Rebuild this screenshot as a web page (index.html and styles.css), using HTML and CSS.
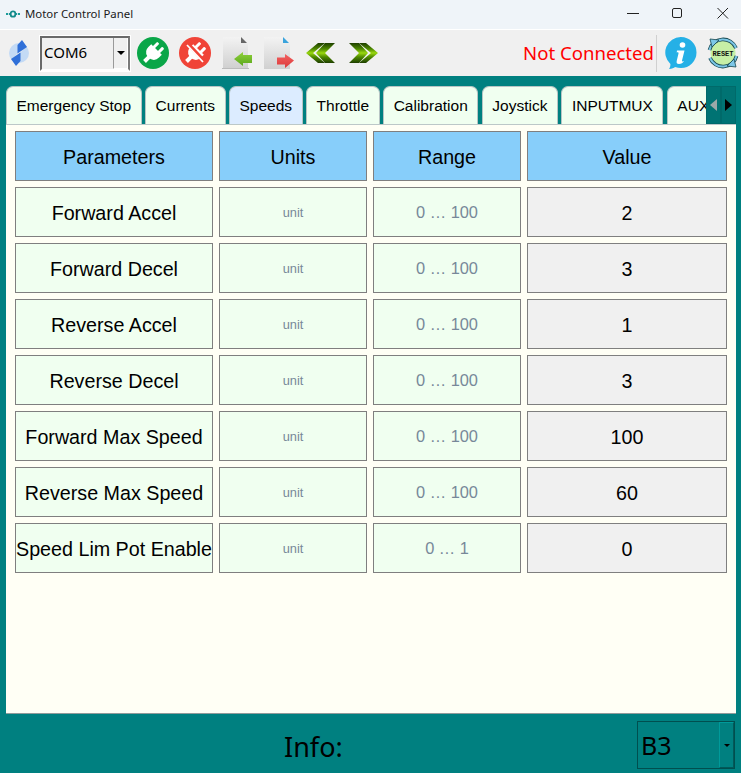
FILE: index.html
```html
<!DOCTYPE html>
<html lang="en">
<head>
<meta charset="utf-8">
<title>Motor Control Panel</title>
<link rel="stylesheet" href="styles.css">
</head>
<body>
<div class="app">
  <header class="titlebar">
    <svg class="app-icon" viewBox="0 0 14 8" width="14" height="8"><path d="M0 3h2v2H0zM2.800 3h1.200v2H2.800zM10 3h1.200v2H10zM12 3h2v2h-2z" fill="#1c9a9a"/><rect x="4.700" y="1.300" width="4.600" height="5.400" rx="2.300" fill="none" stroke="#128a8a" stroke-width="1.800"/></svg>
    <span class="title">Motor Control Panel</span>
    <div class="win-controls">
      <svg class="win-btn" viewBox="0 0 46 30" width="46" height="30"><path d="M24 13.500h12" stroke="#222" stroke-width="1"/></svg>
      <svg class="win-btn" viewBox="0 0 46 30" width="46" height="30"><rect x="23.500" y="8.500" width="9" height="9" rx="1.500" fill="none" stroke="#222" stroke-width="1"/></svg>
      <svg class="win-btn" viewBox="0 0 46 30" width="46" height="30"><path d="M22.500 8l10.500 10.500M33 8L22.500 18.500" stroke="#222" stroke-width="1"/></svg>
    </div>
  </header>

  <div class="toolbar">
    <svg class="logo" viewBox="0 0 20 26" width="20" height="26">
      <circle cx="10" cy="13" r="10" fill="#c3daf5"/>
      <path d="M3 20L17 6" stroke="#f0f0f0" stroke-width="1.500"/>
      <path d="M13 0L18 7 8.500 13.500 8.500 5z" fill="#2f6fd8"/>
      <path d="M7 26L2 19 11.500 12.500 11.500 21z" fill="#2f6fd8"/>
    </svg>
    <div class="com-select">
      <span class="com-value">COM6</span>
      <span class="com-arrow"><i class="caret"></i></span>
    </div>
    <svg class="tool round first" viewBox="0 0 32 32" width="32" height="32">
      <circle cx="16" cy="16" r="16" fill="#0aa648"/>
      <g transform="rotate(45 16 16)" fill="#fff">
        <rect x="11" y="5" width="3" height="7" rx="1"/><rect x="18" y="5" width="3" height="7" rx="1"/>
        <path d="M8.500 11h15v4a7.500 7.500 0 0 1-5.500 7.200V28h-4v-5.800A7.500 7.500 0 0 1 8.500 15z"/>
      </g>
    </svg>
    <svg class="tool round" viewBox="0 0 32 32" width="32" height="32">
      <circle cx="16" cy="16" r="16" fill="#f04438"/>
      <g transform="rotate(45 16 16)" fill="#fff">
        <rect x="11" y="5" width="3" height="7" rx="1"/><rect x="18" y="5" width="3" height="7" rx="1"/>
        <path d="M8.500 11h15v4a7.500 7.500 0 0 1-5.500 7.200V28h-4v-5.800A7.500 7.500 0 0 1 8.500 15z"/>
      </g>
      <path d="M8 6l17 18" stroke="#f04438" stroke-width="4"/>
      <path d="M8 8l16 17" stroke="#fff" stroke-width="1.800"/>
    </svg>
    <svg class="tool file first-file" viewBox="0 0 30 32" width="30" height="32">
      <defs>
        <linearGradient id="pg" x1="0" y1="0" x2="0" y2="1"><stop offset="0" stop-color="#f3f3f3"/><stop offset="1" stop-color="#d0d0d0"/></linearGradient>
        <linearGradient id="ga" x1="0" y1="0" x2="0" y2="1"><stop offset="0" stop-color="#8fd13a"/><stop offset="1" stop-color="#5aa71c"/></linearGradient>
        <linearGradient id="ra" x1="0" y1="0" x2="0" y2="1"><stop offset="0" stop-color="#f26060"/><stop offset="1" stop-color="#dc3a3a"/></linearGradient>
      </defs>
      <path d="M1 0h18l7 7v24H1z" fill="url(#pg)"/>
      <path d="M0 31h27v1H0z" fill="#bbb"/>
      <path d="M19 0l6 6h-6z" fill="#666"/>
      <path d="M12 22l9-7v3h9v8h-9v3z" fill="url(#ga)"/>
    </svg>
    <svg class="tool file" viewBox="0 0 30 32" width="30" height="32">
      <path d="M0 0h19l7 7v25H0z" fill="url(#pg)"/>
      <path d="M19 0l6 6h-6z" fill="#3aa3dc"/>
      <path d="M30 23.500l-9-6.500v3.500h-8v7h8v3.500z" fill="url(#ra)"/>
    </svg>
    <svg class="tool chev first-chev" viewBox="0 0 30 22" width="30" height="22">
      <defs><linearGradient id="ch" x1="0" y1="0" x2="0" y2="1"><stop offset="0" stop-color="#1e3f00"/><stop offset=".3" stop-color="#4f8a00"/><stop offset=".5" stop-color="#9ad80f"/><stop offset=".7" stop-color="#4f8a00"/><stop offset="1" stop-color="#1e3f00"/></linearGradient></defs>
      <path d="M0 11L12 1h7L7 11l12 10h-7z" fill="url(#ch)"/>
      <path d="M10 11L19 1h10L19 11l10 10H19z" fill="url(#ch)"/>
    </svg>
    <svg class="tool chev" viewBox="0 0 30 22" width="30" height="22">
      <path d="M30 11L18 1h-7l12 10-12 10h7z" fill="url(#ch)"/>
      <path d="M20 11L11 1H1l10 10L1 21h10z" fill="url(#ch)"/>
    </svg>
    <span class="status">Not Connected</span>
    <span class="tool-sep"></span>
    <svg class="tool info" viewBox="0 0 32 32" width="32" height="32">
      <path d="M16 0a15.500 15.500 0 0 1 0 31c-2 0-4-.4-6-1-1 1-3 1.800-6 2 1-1.300 1.500-3 1.400-5A15.500 15.500 0 0 1 16 0z" fill="#25b0e6"/>
      <circle cx="17.500" cy="8" r="2.800" fill="#fff"/>
      <path d="M12 13.500h7.500l-2.500 10c-.2 1 .5 1.200 2 .5-1 2-2.700 3-5 3-2 0-2.800-1.300-2.300-3l1.800-7.500c.2-1-.5-1.500-1.800-1z" fill="#fff"/>
    </svg>
    <svg class="tool reset" viewBox="0 0 32 32" width="32" height="32">
      <circle cx="16" cy="16" r="12.500" fill="#c6efa6"/>
      <path d="M2.500 13A14 14 0 0 1 29 11" fill="none" stroke="#17474f" stroke-width="3.600"/>
      <path d="M2.500 13A14 14 0 0 1 29 11" fill="none" stroke="#7cc7e8" stroke-width="2"/>
      <path d="M29.500 19A14 14 0 0 1 3 21" fill="none" stroke="#17474f" stroke-width="3.600"/>
      <path d="M29.500 19A14 14 0 0 1 3 21" fill="none" stroke="#7cc7e8" stroke-width="2"/>
      <path d="M3 2l9 1-7 7z" fill="#7cc7e8" stroke="#17474f" stroke-width=".8"/>
      <path d="M29 30l-9-1 7-7z" fill="#7cc7e8" stroke="#17474f" stroke-width=".8"/>
      <text x="16" y="18.500" class="reset-text" text-anchor="middle">RESET</text>
    </svg>
  </div>

  <main class="content">
    <div class="tabstrip">
      <div class="tab">Emergency Stop</div>
      <div class="tab">Currents</div>
      <div class="tab active">Speeds</div>
      <div class="tab">Throttle</div>
      <div class="tab">Calibration</div>
      <div class="tab">Joystick</div>
      <div class="tab">INPUTMUX</div>
      <div class="tab tab-last">AUX</div>
      <div class="tab-scroll">
        <span class="scroll-btn"><i class="tri left"></i></span>
        <span class="scroll-btn"><i class="tri right"></i></span>
      </div>
    </div>
    <section class="pane">
      <div class="grid">
        <div class="cell head">Parameters</div><div class="cell head">Units</div><div class="cell head">Range</div><div class="cell head">Value</div>

        <div class="cell name">Forward Accel</div><div class="cell unit">unit</div><div class="cell range">0 … 100</div><div class="cell value">2</div>
        <div class="cell name">Forward Decel</div><div class="cell unit">unit</div><div class="cell range">0 … 100</div><div class="cell value">3</div>
        <div class="cell name">Reverse Accel</div><div class="cell unit">unit</div><div class="cell range">0 … 100</div><div class="cell value">1</div>
        <div class="cell name">Reverse Decel</div><div class="cell unit">unit</div><div class="cell range">0 … 100</div><div class="cell value">3</div>
        <div class="cell name">Forward Max Speed</div><div class="cell unit">unit</div><div class="cell range">0 … 100</div><div class="cell value">100</div>
        <div class="cell name">Reverse Max Speed</div><div class="cell unit">unit</div><div class="cell range">0 … 100</div><div class="cell value">60</div>
        <div class="cell name">Speed Lim Pot Enable</div><div class="cell unit">unit</div><div class="cell range">0 … 1</div><div class="cell value">0</div>
      </div>
    </section>
  </main>

  <footer class="footer">
    <span class="info-label">Info:</span>
    <div class="bank-select">
      <span class="bank-value">B3</span>
      <span class="bank-arrow"><i class="caret small"></i></span>
    </div>
  </footer>
</div>
</body>
</html>
```

FILE: styles.css
```css
* { box-sizing: border-box; }
html, body { margin: 0; padding: 0; }
body { width: 741px; height: 773px; overflow: hidden; font-family: "Liberation Sans", Arial, sans-serif; }

.app { display: flex; flex-direction: column; width: 741px; height: 773px; background: #008080; }

.titlebar { display: flex; align-items: center; height: 30px; flex: none; background: #eff4f9; border-bottom: 1px solid #fff; padding-left: 6px; }
.app-icon { flex: none; margin-top: -2px; }
.title { margin-left: 5px; margin-top: -2px; font: 11.400px "Noto Sans", sans-serif; color: #1a1a1a; }
.win-controls { display: flex; margin-left: auto; }
.win-btn { display: block; }

.toolbar { display: flex; align-items: center; height: 46px; flex: none; background: #f0f0f0; padding-left: 9px; }
.tool { flex: none; display: block; }
.logo { flex: none; }
.com-select { display: flex; width: 90px; height: 35px; margin-left: 11px; background: #f0f0f0; border: 2px solid; border-color: #696969 #7a7a7a #fff #696969; outline: 1px solid #fff; font: 15px "Noto Sans", sans-serif; color: #000; }
.com-value { flex: 1; padding-left: 2px; line-height: 29px; }
.com-arrow { display: flex; align-items: center; justify-content: center; width: 15px; background: #f0f0f0; border-left: 1px solid #9a9a9a; border-right: 1px solid #fff; border-bottom: 1px solid #fff; }
.caret { display: block; width: 0; height: 0; border-left: 4px solid transparent; border-right: 4px solid transparent; border-top: 4px solid #000; }
.caret.small { border-left-width: 3.500px; border-right-width: 3.500px; border-top-width: 3.500px; }
.round.first { margin-left: 7px; }
.round + .round { margin-left: 10px; }
.first-file { margin-left: 11px; }
.file + .file { margin-left: 12px; }
.first-chev { margin-left: 12px; }
.chev + .chev { margin-left: 12px; }
.status { margin-left: auto; margin-top: -2px; font: 18.600px "Noto Sans", sans-serif; color: #f00; white-space: nowrap; }
.tool-sep { flex: none; width: 1px; height: 37px; margin-left: 2px; background: #d0d0d0; }
.info { margin-left: 8px; }
.reset { margin-left: 10px; margin-right: 2px; }
.reset-text { font: bold 7px "Liberation Mono", monospace; fill: #111; }

.content { display: flex; flex-direction: column; flex: 1; min-height: 0; padding: 10px 5px 0; }
.tabstrip { position: relative; display: flex; gap: 3.500px; height: 38px; flex: none; overflow: hidden; padding-left: 1px; }
.tab { flex: none; display: flex; align-items: center; padding: 0 9.500px; height: 38px; background: #f0fff0; border: 1px solid #b8c4c4; border-bottom: none; border-radius: 7px 7px 0 0; font-size: 15.500px; color: #000; white-space: nowrap; }
.tab.active { background: #dcecff; }
.tab-last { width: 80px; }
.tab-scroll { position: absolute; top: 0; right: 0; display: flex; height: 38px; }
.scroll-btn { display: flex; align-items: center; justify-content: center; width: 15px; height: 38px; background: #007373; border: 1px solid #006a6a; }
.tri { display: block; width: 0; height: 0; border-top: 6px solid transparent; border-bottom: 6px solid transparent; }
.tri.left { border-right: 7px solid #9aa9a9; }
.tri.right { border-left: 7px solid #000; }

.pane { flex: 1; min-height: 0; margin-left: 1px; background: #fffff5; border-top: 1px solid #bcc8c8; border-bottom: 1px solid #8f9a9a; padding: 6px 9px; }
.grid { display: grid; grid-template-columns: 198px 148px 148px 200px; grid-auto-rows: 50px; gap: 6px; }
.cell { display: flex; align-items: center; justify-content: center; padding-top: 2px; border: 1px solid #7f7f7f; white-space: nowrap; color: #000; font-size: 19.700px; }
.head { background: #87cefa; }
.name { background: #f0fff0; }
.unit { padding-top: 0; background: #f0fff0; color: #778899; font-size: 12.800px; }
.range { padding-top: 0; background: #f0fff0; color: #778899; font-size: 16.400px; }
.value { background: #f0f0f0; }

.footer { display: flex; align-items: center; height: 59px; flex: none; }
.info-label { margin-left: 284px; margin-top: 6px; font: 27px "Noto Sans", sans-serif; color: #000; }
.bank-select { display: flex; width: 98px; height: 48px; margin-left: auto; margin-right: 6px; margin-top: 3px; border: 1px solid #004f4f; color: #000; font: 25px "Noto Sans", sans-serif; }
.bank-value { flex: 1; padding-left: 3px; line-height: 46px; }
.bank-arrow { display: flex; align-items: center; justify-content: center; width: 15px; border: 1px solid; border-color: #009a9a #005a5a #005a5a #009a9a; }
```
